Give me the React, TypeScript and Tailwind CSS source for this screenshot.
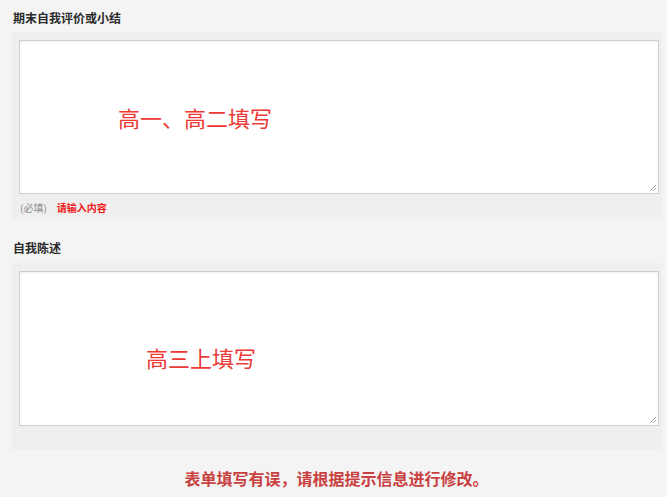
import React from "react";

const Grip = () => (
  <svg className="absolute right-[1px] bottom-[1px]" width="9" height="9" viewBox="0 0 9 9">
    <line x1="8" y1="2" x2="2" y2="8" stroke="#a8a8a8" strokeWidth="1" />
    <line x1="8" y1="5" x2="5" y2="8" stroke="#a8a8a8" strokeWidth="1" />
  </svg>
);

export default function App() {
  return (
    <div
      className="w-[667px] h-[497px] bg-[#f4f4f4] overflow-hidden"
      style={{ fontFamily: '"Noto Sans CJK SC", "Noto Sans", sans-serif' }}
    >
      <div className="pt-[11px] pl-[13px] text-[12px] leading-[14px] font-bold text-[#2a2a2a]">期末自我评价或小结</div>
      <div className="mt-[7px] ml-[12px] mr-[5px] bg-[#efefef] pt-[8px] pl-[7px] pr-[3px] pb-[5px]">
        <div className="relative h-[154px] bg-white border border-[#cfcfcf] shadow-[inset_0_1px_2px_rgba(0,0,0,0.08)]">
          <div className="pl-[98px] pt-[63px] text-[22px] leading-[26px] text-[#ec3a36]">高一、高二填写</div>
          <Grip />
        </div>
        <div className="mt-[6px] flex items-center h-[14px] pl-[1px]">
          <span className="text-[10px] text-[#8a8a8a]">(必填)</span>
          <span className="ml-[10px] text-[10px] font-bold text-[#f01818]">请输入内容</span>
        </div>
      </div>
      <div className="mt-[22px] pl-[13px] text-[12px] leading-[14px] font-bold text-[#2a2a2a]">自我陈述</div>
      <div className="mt-[8px] ml-[12px] mr-[5px] bg-[#efefef] pt-[8px] pl-[7px] pr-[3px] pb-[24px]">
        <div className="relative h-[155px] bg-white border border-[#cfcfcf] shadow-[inset_0_1px_2px_rgba(0,0,0,0.08)]">
          <div className="pl-[126px] pt-[72px] text-[22px] leading-[26px] text-[#ec3a36]">高三上填写</div>
          <Grip />
        </div>
      </div>
      <div className="mt-[18px] text-center text-[16px] leading-[20px] font-bold text-[#c94040] pl-[6px]">
        表单填写有误，请根据提示信息进行修改。
      </div>
    </div>
  );
}
